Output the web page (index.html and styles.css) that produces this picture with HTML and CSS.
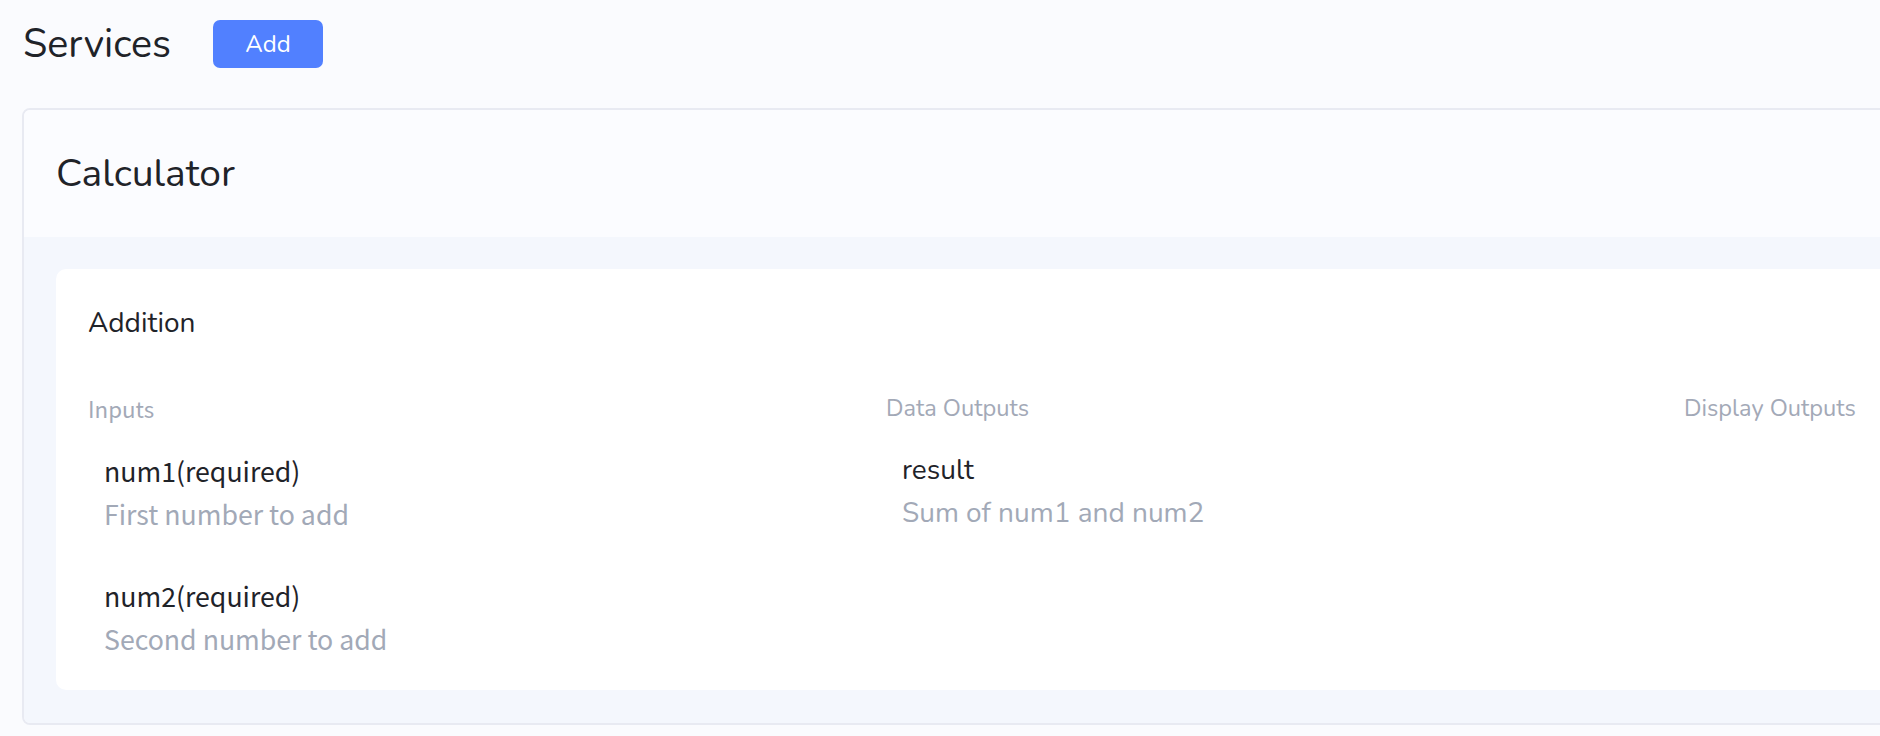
FILE: index.html
```html
<!DOCTYPE html>
<html lang="en">
<head>
<meta charset="utf-8">
<title>Services</title>
<link rel="stylesheet" href="styles.css">
</head>
<body>
<div class="page">
  <div class="topbar">
    <h1 class="page-title">Services</h1>
    <button class="btn-add">Add</button>
  </div>
  <section class="service-card">
    <header class="service-header">
      <h2 class="service-name">Calculator</h2>
    </header>
    <div class="service-body">
      <div class="method-card">
        <h3 class="method-name">Addition</h3>
        <div class="method-grid">
          <div class="col col-inputs">
            <div class="col-label cjk">Inputs</div>
            <div class="item cjk">
              <div class="item-name">num1(required)</div>
              <div class="item-desc">First number to add</div>
            </div>
            <div class="item cjk">
              <div class="item-name">num2(required)</div>
              <div class="item-desc">Second number to add</div>
            </div>
          </div>
          <div class="col">
            <div class="col-label">Data Outputs</div>
            <div class="item">
              <div class="item-name">result</div>
              <div class="item-desc">Sum of num1 and num2</div>
            </div>
          </div>
          <div class="col">
            <div class="col-label">Display Outputs</div>
          </div>
        </div>
      </div>
    </div>
  </section>
</div>
</body>
</html>
```

FILE: styles.css
```css
html, body {
  margin: 0;
  padding: 0;
  background: #fafbfe;
}
body {
  font-family: "Nunito", "Lato", "Noto Sans", sans-serif;
  color: #1f2329;
}
.page {
  padding: 20px 0 0 22px;
  width: max-content;
}
.topbar {
  display: flex;
  align-items: center;
  gap: 42px;
  height: 48px;
}
.page-title {
  margin: 0;
  font-size: 39.5px;
  font-weight: 400;
  line-height: 48px;
  padding-left: 1px;
}
.btn-add {
  width: 110px;
  height: 48px;
  border: none;
  border-radius: 7px;
  background: #5180ff;
  color: #ffffff;
  font-family: inherit;
  font-size: 24px;
  padding: 0;
}
.service-card {
  margin-top: 40px;
  border: 2px solid #e8eaf2;
  border-radius: 8px;
  background: #fbfcff;
  overflow: hidden;
}
.service-header {
  height: 127px;
  display: flex;
  align-items: center;
  padding-left: 32px;
  background: #fbfcff;
}
.service-name {
  margin: 0;
  font-size: 39px;
  font-weight: 400;
}
.service-body {
  background: #f4f7fd;
  padding: 32px;
  padding-bottom: 33px;
}
.method-card {
  background: #ffffff;
  border-radius: 10px;
  padding: 34px 32px 30px;
}
.method-name {
  margin: 0;
  font-size: 28px;
  font-weight: 400;
  line-height: 40px;
}
.method-grid {
  margin-top: 47px;
  display: grid;
  grid-template-columns: repeat(3, 798px);
}
.col-label {
  font-size: 23.6px;
  line-height: 36px;
  color: #a3a9b7;
}
.item {
  padding-left: 16px;
  margin-top: 23px;
  font-size: 28px;
  line-height: 43px;
}
.item + .item {
  margin-top: 39px;
}
.item-name {
  color: #1f2329;
}
.item-desc {
  color: #a2a9b7;
}
.cjk {
  font-family: "Noto Sans CJK SC", "Noto Sans", sans-serif;
}
.item.cjk {
  font-size: 26.7px;
}
.cjk.col-label {
  font-size: 22.3px;
}
```
